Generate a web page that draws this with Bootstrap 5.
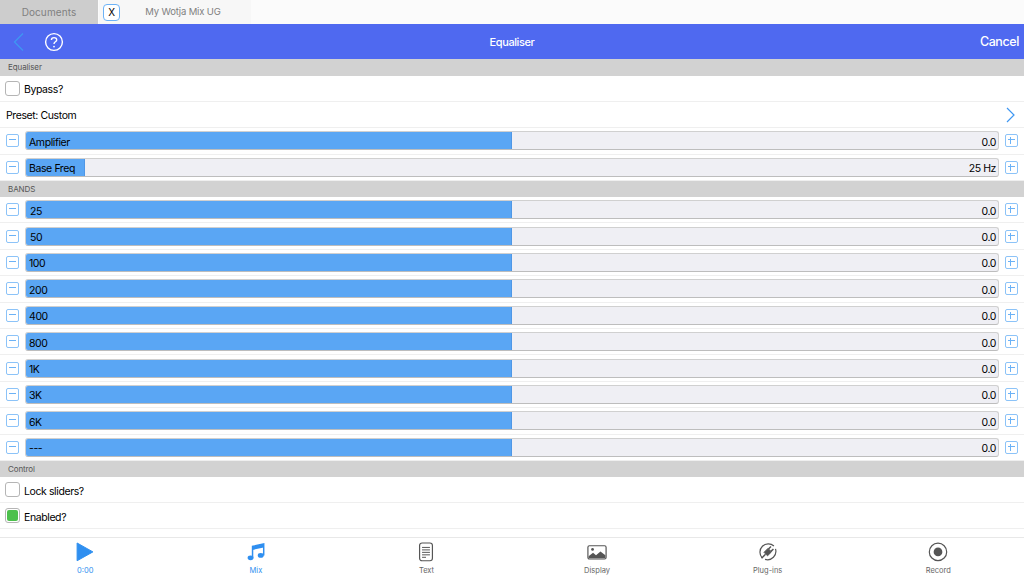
<!DOCTYPE html>
<html lang="en">
<head>
    <meta charset="UTF-8">
    <title>Equaliser</title>
    <link href="https://cdn.jsdelivr.net/npm/bootstrap@5.3.0/dist/css/bootstrap.min.css" rel="stylesheet">
    <style>
        html, body { height: 576px; overflow: hidden; }
        body { font-family: Inter, "Liberation Sans", sans-serif; font-size: 10.5px; letter-spacing: -.4px; color: #000; background: #fff; }
        .tab-strip { height: 24px; background: #fbfbfb; }
        .tab-docs { width: 98px; padding-top: 1px; background: #cdcdcd; color: #808080; font-size: 10px; letter-spacing: .1px; }
        .tab-mix { width: 152px; margin-left: 1px; background: #f7f7f7; color: #808080; font-size: 9.5px; letter-spacing: -.15px; }
        .tab-name { padding: 1px 5px 0 0; }
        .tab-close { width: 17px; height: 17px; margin: 0 0 0 4px; border: 1.5px solid #6cb2f6; border-radius: 4px; background: #fff; color: #000; font-size: 10px; line-height: 14px; text-align: center; }
        .title-bar { height: 35px; background: #4f69f0; color: #fff; font-size: 11px; font-weight: 500; }
        .title-mid { padding-top: 2px; }
        .title-side { width: 160px; }
        .cancel-link { font-size: 12.5px; font-weight: 500; padding: 2px 5px 0 0; }
        .section-head { height: 16px; background: #d2d2d2; color: #555; font-size: 8px; letter-spacing: -.1px; padding-left: 8px; line-height: 16px; }
        .section-head.first-head { height: 17px; }
        .line-row { height: 26px; border-bottom: 1px solid #efefef; padding-left: 5px; }
        .line-row.preset { padding-left: 6px; padding-right: 9px; }
        .row-label { padding-top: 2px; }
        .row-label.low { padding-top: 4px; }
        .tick-box { width: 15px; height: 15px; border: 1px solid #b5b5b5; border-radius: 3px; margin-right: 4px; padding: 1px; background: #fff; }
        .tick-box.on::before { content: ""; display: block; width: 100%; height: 100%; background: #4cc04c; border-radius: 2px; }
        .slide-row { height: 26.4px; border-bottom: 1px solid #efefef; padding: 0 6px; gap: 6px; }
        .slide-row.head-row { height: 26.5px; }
        .step-btn { flex: none; width: 13px; height: 13px; border: 1.5px solid #8cc3f8; border-radius: 2px; background: #fff; position: relative; }
        .step-btn::before { content: ""; position: absolute; left: 2px; right: 2px; top: 4px; height: 1px; background: #6cb2f6; }
        .step-btn.plus::after { content: ""; position: absolute; top: 2px; bottom: 2px; left: 4px; width: 1px; background: #6cb2f6; }
        .slide-track { flex: 1; height: 19px; position: relative; background: #efeff4; border: 1px solid #d0d0d0; border-bottom-color: #bdbdbd; border-radius: 3px; overflow: hidden; }
        .slide-fill { position: absolute; left: 0; top: 0; bottom: 0; background: #5aa6f4; border-right: 1px solid #4f97e6; }
        .slide-text { position: relative; height: 100%; padding: 1.5px 2px 0 3px; line-height: 17px; }
        .slide-text.inset { padding-left: 4px; }
        .bottom-tabs { height: 39px; margin-top: 8px; border-top: 1px solid #e8e8e8; }
        .bottom-tab { width: 170.6px; color: #666; font-size: 7.5px; letter-spacing: 0; padding-top: 4px; }
        .bottom-tab.active { color: #2f8ff0; }
        .bottom-tab svg { display: block; height: 20px; margin-bottom: 3px; }
    </style>
</head>
<body>
    <div class="tab-strip d-flex">
        <div class="tab-docs d-flex align-items-center justify-content-center">Documents</div>
        <div class="tab-mix d-flex align-items-center">
            <div class="tab-close">X</div>
            <div class="tab-name flex-grow-1 text-center">My Wotja Mix UG</div>
        </div>
    </div>

    <div class="title-bar d-flex align-items-center justify-content-between">
        <div class="title-side d-flex align-items-center">
            <svg width="14" height="20" viewBox="0 0 14 20" style="margin-left:10px" fill="none" stroke="#3f97f2" stroke-width="1.3"><path d="M13 1.5 L4.5 10 L13 18.5"/></svg>
            <svg width="20" height="20" viewBox="0 0 20 20" style="margin-left:20px" fill="none" stroke="#fff" stroke-width="1.4">
                <circle cx="10" cy="10" r="8.4"/>
                <path d="M7.4 7.9 C7.4 4.8 12.7 4.8 12.7 7.9 C12.7 9.8 10 9.8 10 12"/>
                <circle cx="10" cy="14.6" r=".9" fill="#fff" stroke="none"/>
            </svg>
        </div>
        <div class="title-mid">Equaliser</div>
        <div class="title-side text-end cancel-link">Cancel</div>
    </div>

    <div class="section-head first-head">Equaliser</div>
    <div class="line-row d-flex align-items-center"><span class="tick-box"></span><span class="row-label">Bypass?</span></div>
    <div class="line-row preset d-flex align-items-center justify-content-between">
        <span class="row-label">Preset: Custom</span>
        <svg width="9" height="16" viewBox="0 0 9 16" fill="none" stroke="#3f97f2" stroke-width="1.2"><path d="M1 1 L8 8 L1 15"/></svg>
    </div>
    <div id="topSliders"></div>

    <div class="section-head">BANDS</div>
    <div id="bandSliders"></div>

    <div class="section-head">Control</div>
    <div class="line-row d-flex align-items-center"><span class="tick-box"></span><span class="row-label low">Lock sliders?</span></div>
    <div class="line-row d-flex align-items-center"><span class="tick-box on"></span><span class="row-label low">Enabled?</span></div>

    <div class="bottom-tabs d-flex">
        <div class="bottom-tab active d-flex flex-column align-items-center">
            <svg width="20" height="20" viewBox="0 0 20 20"><path d="M2 1 L18 10 L2 19 Z" fill="#2f8ff0" stroke="#2f8ff0" stroke-linejoin="round"/></svg>
            0:00
        </div>
        <div class="bottom-tab active d-flex flex-column align-items-center">
            <svg width="20" height="20" viewBox="0 0 20 20" fill="#2f8ff0"><ellipse cx="4.5" cy="16" rx="3" ry="2.4"/><ellipse cx="14.8" cy="13.6" rx="3" ry="2.4"/><path d="M6.5 16 V4.5 L17.8 2 V13.6" fill="none" stroke="#2f8ff0" stroke-width="1.5"/><path d="M6.5 4.5 L17.8 2 V5.5 L6.5 8 Z"/></svg>
            Mix
        </div>
        <div class="bottom-tab d-flex flex-column align-items-center">
            <svg width="20" height="20" viewBox="0 0 20 20" fill="none" stroke="#555"><rect x="3.5" y="1" width="13" height="18" rx="2.5" stroke-width="1.2"/><path d="M6 5.5 H14 M6 8 H14 M6 10.5 H14 M6 13 H14 M6 15.5 H10" stroke-width="1"/></svg>
            Text
        </div>
        <div class="bottom-tab d-flex flex-column align-items-center">
            <svg width="20" height="20" viewBox="0 0 20 20"><rect x=".8" y="3.8" width="18.4" height="13.4" rx="1.5" fill="#fff" stroke="#555" stroke-width="1.2"/><circle cx="5.5" cy="7.5" r="1.4" fill="#555"/><path d="M1.5 16.5 V14.5 L6 11 L9 13.5 L13.5 9.5 L18.5 13.5 V16.5 Z" fill="#555"/></svg>
            Display
        </div>
        <div class="bottom-tab d-flex flex-column align-items-center">
            <svg width="20" height="20" viewBox="0 0 20 20" fill="none" stroke="#555"><path d="M4 16 A8.5 8.5 0 0 1 16 4 M17.6 7 A8.5 8.5 0 0 1 7 17.6" stroke-width="1.2"/><path d="M6 10.5 L10 6.5 L13.5 10 L9.5 14 Z" fill="#555"/><path d="M10.5 7 L13 4.5 M13 9.5 L15.5 7 M7.5 12.5 L3.5 16.5" stroke-width="1.5"/></svg>
            Plug-ins
        </div>
        <div class="bottom-tab d-flex flex-column align-items-center">
            <svg width="20" height="20" viewBox="0 0 20 20"><circle cx="10" cy="10" r="8.8" fill="none" stroke="#555" stroke-width="1.2"/><circle cx="10" cy="10" r="4.4" fill="#555"/></svg>
            Record
        </div>
    </div>

    <script>
        // Slider rows, filled in from data
        function sliderRow(s) {
            return `
                <div class="slide-row d-flex align-items-center ${s.head ? 'head-row' : ''}">
                    <div class="step-btn"></div>
                    <div class="slide-track">
                        <div class="slide-fill" style="width: ${s.pct}%"></div>
                        <div class="slide-text d-flex justify-content-between ${s.inset ? 'inset' : ''}">
                            <span>${s.name}</span><span>${s.value}</span>
                        </div>
                    </div>
                    <div class="step-btn plus"></div>
                </div>`;
        }

        const headSliders = [
            { name: 'Amplifier', value: '0.0', pct: 50, head: true },
            { name: 'Base Freq', value: '25 Hz', pct: 6.1, head: true }
        ];
        const bands = ['25', '50', '100', '200', '400', '800', '1K', '3K', '6K', '---'].map(name => (
            { name, value: '0.0', pct: 50, inset: name === '25' || name === '50' }
        ));

        document.getElementById('topSliders').innerHTML = headSliders.map(sliderRow).join('');
        document.getElementById('bandSliders').innerHTML = bands.map(sliderRow).join('');
    </script>
    <script src="https://cdn.jsdelivr.net/npm/bootstrap@5.3.0/dist/js/bootstrap.bundle.min.js"></script>
</body>
</html>
